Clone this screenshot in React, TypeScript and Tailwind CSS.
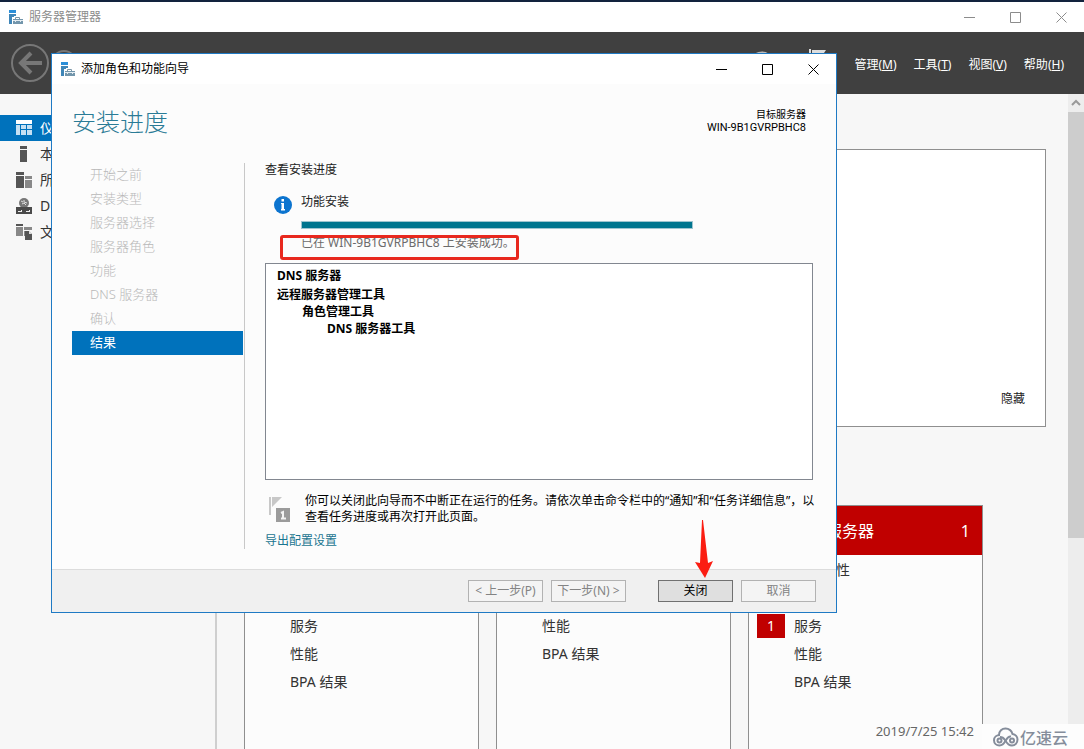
import React from 'react';

const steps = ['开始之前', '安装类型', '服务器选择', '服务器角色', '功能', 'DNS 服务器', '确认', '结果'];

const menus = [
  { label: '管理', key: 'M' },
  { label: '工具', key: 'T' },
  { label: '视图', key: 'V' },
  { label: '帮助', key: 'H' },
];

// blank rows stay empty behind the wizard
const tiles = [
  { id: 'dns', title: '', count: '', rows: ['', '', '服务', '性能', 'BPA 结果'] },
  { id: 'files', title: '', count: '', rows: ['', '', '性能', 'BPA 结果'] },
  { id: 'all', title: '所有服务器', count: '1', rows: ['可管理性', '', '服务', '性能', 'BPA 结果'], alert: '服务', date: '2019/7/25 15:42' },
];

function AppIcon() {
  return (
    <svg width="14" height="14" viewBox="0 0 14 14" className="shrink-0">
      <path fill="#2b8fd9" d="M0 0h7v3H0z" />
      <path fill="#3f86b8" d="M0 4h7v2H5v1H3v7H0z" />
      <path fill="none" stroke="#7c97a8" d="M6.500 9V7.500h4V9" />
      <path fill="#7396ac" d="M4 9h10v5H4z" />
      <path stroke="#e4ecf1" d="M4 10.500h10M6.500 10v2M11.500 10v2" />
    </svg>
  );
}

function WindowButtons({ color }: { color: string }) {
  return (
    <div className={`ml-auto flex h-full ${color}`}>
      <button aria-label="最小化" className="flex w-[46px] items-center justify-center">
        <svg width="11" height="11" fill="none" stroke="currentColor"><path d="M0 5.500h11" /></svg>
      </button>
      <button aria-label="最大化" className="flex w-[46px] items-center justify-center">
        <svg width="11" height="11" fill="none" stroke="currentColor"><path d="M.5.500h10v10H.5z" /></svg>
      </button>
      <button aria-label="关闭窗口" className="flex w-[46px] items-center justify-center">
        <svg width="11" height="11" fill="none" stroke="currentColor"><path d="M.5.500l10 10M10.500.500l-10 10" /></svg>
      </button>
    </div>
  );
}

const sideItems = [
  {
    label: '仪',
    name: '仪表板',
    icon: (
      <>
        <path fill="#fff" d="M0 0h16v4H0z" />
        <path fill="#c5e0f3" d="M0 5h4v10H0zM5 5h5v4H5zM11 5h5v4h-5zM5 10h5v5H5zM11 10h5v5h-5z" />
      </>
    ),
  },
  { label: '本', name: '本地服务器', icon: <path fill="#555" d="M4 0h7v3H4zM4 4h7v12H4z" /> },
  {
    label: '所',
    name: '所有服务器',
    icon: (
      <>
        <path fill="#555" d="M0 0h8v3H0zM0 4h8v12H0z" />
        <path fill="#888" d="M9 4h7v3H9zM9 8h7v8H9z" />
      </>
    ),
  },
  {
    label: 'D',
    name: 'DNS',
    icon: (
      <>
        <circle cx="8" cy="5" r="5" fill="#777" />
        <path fill="none" stroke="#ddd" d="M5 3l2 1M8 2v2l3 1M6 6l2-1 2 2" />
        <path fill="#4a4a4a" d="M0 9h16v7H0z" />
        <path stroke="#eee" d="M2 13.500h4M10 13.500h4M5.500 12v2M13.500 12v2" />
      </>
    ),
  },
  {
    label: '文',
    name: '文件和存储服务',
    icon: (
      <>
        <path fill="#555" d="M0 0h7v2H0z" />
        <path fill="#888" d="M0 3h7v9H0zM8 3h8v3H8zM8 7h2v5H8z" />
        <path fill="#555" d="M9 7h4l3 3v6H9z" />
        <path fill="#ddd" d="M13 6v4h3z" />
      </>
    ),
  },
];

function Sidebar() {
  return (
    <aside className="w-[217px] shrink-0 border-r-2 border-[#cfcfcf] pt-[21px]">
      <nav>
        {sideItems.map((item, i) => (
          <a
            key={item.name}
            href="#"
            aria-label={item.name}
            className={`flex h-[26px] items-center gap-2 pl-4 text-sm ${i === 0 ? 'bg-[#0072bc] text-white' : 'text-[#333]'}`}
          >
            <svg width="16" height="16" viewBox="0 0 16 16">{item.icon}</svg>
            {item.label}
          </a>
        ))}
      </nav>
    </aside>
  );
}

function Dashboard() {
  return (
    <main className="min-w-0 flex-1 pl-[27px] pr-[22px] pt-[55px]">
      <section className="flex h-[278px] items-end justify-end border border-[#8f8f8f] bg-white px-5 py-[17px]">
        <button className="text-xs leading-5 text-[#222]">隐藏</button>
      </section>

      <div className="mt-[78px] flex gap-[17px]">
        {tiles.map((tile) => (
          <section key={tile.id} className="w-[235px] shrink-0 border border-[#8f8f8f] bg-[#fcfcfc] pb-5">
            <h2 className={`flex h-[49px] items-center justify-between pl-[45px] pr-3 text-base ${tile.alert ? 'bg-[#c00000] text-white' : 'text-[#333]'}`}>
              <span>{tile.title}</span>
              <span>{tile.count}</span>
            </h2>
            <ul className="pt-px text-sm text-[#333]">
              {tile.rows.map((row, i) => (
                <li key={i} className="flex h-7 items-center pl-2">
                  <span className={`mr-[9px] flex h-6 w-7 items-center justify-center text-white ${row && row === tile.alert ? 'bg-[#c00000]' : ''}`}>
                    {row && row === tile.alert ? '1' : ''}
                  </span>
                  {row}
                </li>
              ))}
            </ul>
            {tile.date && <p className="mt-[25px] pr-2 text-right text-[13px] leading-5 text-[#666]">{tile.date}</p>}
          </section>
        ))}
      </div>
    </main>
  );
}

function Wizard() {
  return (
    <div role="dialog" aria-label="添加角色和功能向导" className="absolute left-[51px] top-[51px] flex w-[786px] flex-col border border-[#1f7ac4] bg-[#fcfcfc]">
      <div className="flex h-[30px] items-center bg-white pl-[9px] text-xs text-black">
        <AppIcon />
        <span className="ml-[6px]">添加角色和功能向导</span>
        <WindowButtons color="text-black" />
      </div>

      <header className="flex h-[79px] items-start justify-between pl-5 pr-[30px] pt-5">
        <h1 className="text-2xl font-light leading-9 text-[#2a7b96]">安装进度</h1>
        <div className="mt-1 text-right text-black">
          <p className="text-[10px] leading-[13px]">目标服务器</p>
          <p className="font-['Roboto',sans-serif] text-[11px] leading-[13px]">WIN-9B1GVRPBHC8</p>
        </div>
      </header>

      <div className="flex pb-5 pl-5">
        <ol className="w-[173px] shrink-0 border-r border-[#c8c8c8] pr-px text-[13px]">
          {steps.map((step) => (
            <li
              key={step}
              className={`flex h-6 items-center pl-[18px] ${step === '结果' ? 'bg-[#0072bc] text-white' : 'font-light text-[#b8b8b8]'}`}
            >
              {step}
            </li>
          ))}
        </ol>

        <div className="flex-1 pl-5 pr-[18px] text-xs text-[#222]">
          <p className="leading-[14px]">查看安装进度</p>

          <div className="mt-[17px] flex items-start pl-[9px]">
            <svg width="18" height="18" viewBox="0 0 18 18" className="mt-[2px] shrink-0">
              <circle cx="9" cy="9" r="9" fill="#0c74cf" />
              <path fill="#fff" d="M7.500 3H10v2.500H7.500zM7 7h3v6h1v1.500H7V13h.5V8H7z" />
            </svg>
            <div className="relative ml-[9px]">
              <p className="leading-4">功能安装</p>
              <div className="mt-[11px] h-2 w-[392px] border border-[#9fc5d0] bg-[#00758f]" />
              <p className="mt-[7px] leading-[14px] text-[#6b6b6b]">已在 WIN-9B1GVRPBHC8 上安装成功。</p>
              <div className="absolute -left-[21px] top-[41px] h-[25px] w-[239px] rounded-[3px] border-[3px] border-[#e8281e]" />
            </div>
          </div>

          <ul className="mt-[13px] h-[217px] w-[548px] border border-[#828790] bg-white pl-[11px] pt-[3px] font-bold leading-[17px] text-black">
            <li className="mb-[2px]">DNS 服务器</li>
            <li>
              远程服务器管理工具
              <ul className="pl-[25px]">
                <li>
                  角色管理工具
                  <ul className="pl-[25px]">
                    <li>DNS 服务器工具</li>
                  </ul>
                </li>
              </ul>
            </li>
          </ul>

          <div className="mt-[13px] flex items-start text-black">
            <svg width="22" height="26" viewBox="0 0 22 26" className="ml-1 mr-[14px] mt-1 shrink-0">
              <path fill="#c8c8c8" d="M0 0h2v18H0zM3 0h10L3 10z" />
              <path fill="#9b9b9b" d="M7 11h14v14H7z" />
              <path fill="none" stroke="#f4f4f4" strokeWidth="2" d="M12 16l2-1v7M12 21.500h5" />
            </svg>
            <p className="leading-4">
              你可以关闭此向导而不中断正在运行的任务。请依次单击命令栏中的“通知”和“任务详细信息”，以查看任务进度或再次打开此页面。
            </p>
          </div>
          <a href="#" className="mt-2 block leading-4 text-[#1a7590]">导出配置设置</a>
        </div>
      </div>

      <footer className="flex h-[43px] items-center justify-end gap-2 border-t border-[#dcdcdc] bg-[#f0f0f0] pr-5 text-xs">
        <button disabled className="h-[22px] w-[75px] border border-[#b2b2b2] bg-[#f4f4f4] text-[#838383]">{'< 上一步(P)'}</button>
        <button disabled className="h-[22px] w-[75px] border border-[#b2b2b2] bg-[#f4f4f4] text-[#838383]">{'下一步(N) >'}</button>
        <button className="ml-6 h-[22px] w-[75px] border border-[#707070] bg-[#dfdfdf] text-black">关闭</button>
        <button disabled className="h-[22px] w-[75px] border border-[#b2b2b2] bg-[#f4f4f4] text-[#838383]">取消</button>
      </footer>

      {/* pointer to the close button */}
      <svg width="18" height="58" viewBox="0 0 18 58" className="absolute bottom-[34px] right-[123px]">
        <path fill="#fb1d12" d="M7 0h1l5 43 5-2-8 17-10-16 5 1z" />
      </svg>
    </div>
  );
}

export default function App() {
  return (
    <div className="relative flex h-screen flex-col overflow-hidden border-t-2 border-[#12233d] bg-[#f7f7f7] font-['Noto_Sans','Noto_Sans_CJK_SC',sans-serif]">
      <div className="flex h-[30px] shrink-0 items-center bg-white pl-[9px] text-xs text-[#8c8c8c]">
        <AppIcon />
        <span className="ml-[6px]">服务器管理器</span>
        <WindowButtons color="text-[#8c8c8c]" />
      </div>

      <header className="flex h-[62px] shrink-0 items-center bg-[#404040] pl-[11px] pr-5 text-white">
        <button aria-label="后退">
          <svg width="38" height="38" viewBox="0 0 38 38" fill="none" stroke="#777">
            <circle cx="19" cy="19" r="18" strokeWidth="2" />
            <path strokeWidth="4" d="M31 19H10M20 9L10 19l10 10" />
          </svg>
        </button>
        <button aria-label="前进" className="ml-[2px]">
          <svg width="26" height="26" viewBox="0 0 26 26" fill="none" stroke="#777">
            <circle cx="13" cy="13" r="12" strokeWidth="2" />
            <path strokeWidth="3" d="M5 13h15M13 6l7 7-7 7" />
          </svg>
        </button>
        <div className="ml-auto mr-7 flex items-center gap-[34px]">
          <button aria-label="刷新">
            <svg width="26" height="26" viewBox="0 0 26 26" fill="none" stroke="#bbb" strokeWidth="2">
              <path d="M21 21A11 11 0 1 1 24 13M20 11l4 3 2-4" />
            </svg>
          </button>
          <button aria-label="通知">
            <svg width="17" height="28" fill="#ddd"><path d="M0 0h2v28H0zM3 1h14l-4 6 4 6H3z" /></svg>
          </button>
        </div>
        <nav className="flex gap-[17px] pt-[3px] text-xs">
          {menus.map((m) => (
            <button key={m.key}>
              {m.label}(<u>{m.key}</u>)
            </button>
          ))}
        </nav>
      </header>

      <div className="flex min-h-0 flex-1">
        <Sidebar />
        <Dashboard />
        <div className="w-4 shrink-0 bg-[#ededed]">
          <svg width="16" height="18" fill="none" stroke="#999" strokeWidth="2"><path d="M4 11l4-4 4 4" /></svg>
          <div className="h-[426px] bg-[#cdcdcd]" />
        </div>
      </div>

      <Wizard />

      <div className="absolute bottom-0 right-0 flex h-[25px] w-[102px] items-center bg-[#fdfdfd] pl-[11px] font-['Noto_Sans_CJK_SC',sans-serif] text-base font-medium text-[#858d9b]">
        <svg width="26" height="20" viewBox="0 0 26 20" fill="none" stroke="currentColor" strokeWidth="2" className="mr-px">
          <path d="M6 8C6 4 9 1.500 12.500 1.500S19 4 19.500 7c3 .5 5 3 5 5.500 0 3.500-2.500 6-5.500 6-4 0-5.500-3-7-5.500-1.500-2.500-3.500-3-5-3" />
          <path d="M7 8c-3.500 0-6 2-6 5.200S3.500 18.500 6.500 18.500c4 0 5-3 6.500-5.500s3-4 5-3.500" />
          <circle cx="6.500" cy="13.500" r="2" />
          <circle cx="19" cy="13.500" r="2" />
        </svg>
        亿速云
      </div>
    </div>
  );
}
